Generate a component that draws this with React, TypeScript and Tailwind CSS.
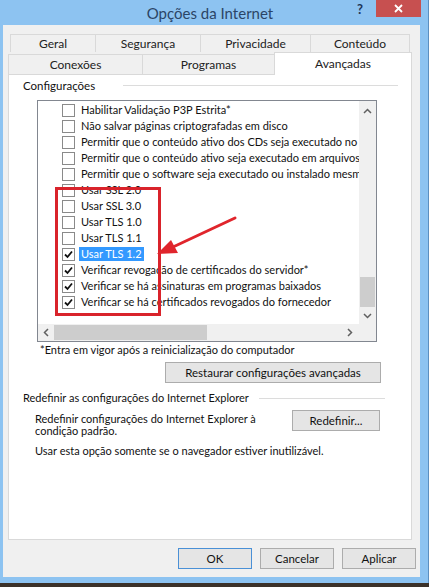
import React from "react";

type Item = { label: string; checked: boolean; selected?: boolean };

const items: Item[] = [
	{ label: "Habilitar Validação P3P Estrita*", checked: false },
	{ label: "Não salvar páginas criptografadas em disco", checked: false },
	{ label: "Permitir que o conteúdo ativo dos CDs seja executado no computador", checked: false },
	{ label: "Permitir que o conteúdo ativo seja executado em arquivos do computador", checked: false },
	{ label: "Permitir que o software seja executado ou instalado mesmo se a assinatura for inválida", checked: false },
	{ label: "Usar SSL 2.0", checked: false },
	{ label: "Usar SSL 3.0", checked: false },
	{ label: "Usar TLS 1.0", checked: false },
	{ label: "Usar TLS 1.1", checked: false },
	{ label: "Usar TLS 1.2", checked: true, selected: true },
	{ label: "Verificar revogação de certificados do servidor*", checked: true },
	{ label: "Verificar se há assinaturas em programas baixados", checked: true },
	{ label: "Verificar se há certificados revogados do fornecedor", checked: true },
];

const font = { fontFamily: 'Lato, "Noto Sans", sans-serif' };

function CheckBox({ checked }: { checked: boolean }) {
	return (
		<div className="w-[13px] h-[13px] shrink-0 border border-[#8a8a8a] bg-white flex items-center justify-center">
			{checked && (
				<svg width="9" height="9" viewBox="0 0 9 9">
					<path d="M1 4.5 L3.5 7 L8 1.5" fill="none" stroke="#111" strokeWidth="1.8" />
				</svg>
			)}
		</div>
	);
}

function Button({ label, width, primary }: { label: string; width: string; primary?: boolean }) {
	return (
		<div
			className={`${width} h-[21px] flex items-center justify-center text-[11.5px] text-[#111] bg-[#e5e5e5] border ${
				primary ? "border-[#4a90d6]" : "border-[#acacac]"
			}`}
		>
			{label}
		</div>
	);
}

function Tab({ label, width }: { label: string; width: string }) {
	return (
		<div
			className={`${width} h-[18px] flex items-center justify-center bg-[#f0f0f0] border border-[#d9d9d9] border-b-0 -ml-px first:ml-0 text-[12px] text-[#222]`}
		>
			{label}
		</div>
	);
}

export default function App() {
	return (
		<div className="w-[429px] h-[587px] bg-[#3b3129] overflow-hidden" style={font}>
			<div className="h-[583px] bg-[#8dc3f1] border-r border-[#5c8fc0] flex flex-col">
				{/* title bar */}
				<div className="h-[25px] shrink-0 relative flex justify-center">
					<span className="ml-[-8px] mt-[2px] text-[15px] text-[#2b4566]">Opções da Internet</span>
					<span className="absolute left-[357px] top-0 text-[13px] font-bold text-[#1d3557]">?</span>
					<div className="absolute left-[376px] top-0 w-[45px] h-[17px] bg-[#c75050] flex items-center justify-center">
						<svg width="9" height="9" viewBox="0 0 9 9">
							<path d="M1 1 L8 8 M8 1 L1 8" stroke="#fff" strokeWidth="1.8" />
						</svg>
					</div>
				</div>

				{/* client area */}
				<div className="ml-[3px] mr-[8px] h-[552px] bg-[#f0f0f0] flex flex-col relative">
					{/* tabs */}
					<div className="mt-[9px] ml-[7px] flex">
						<Tab label="Geral" width="w-[86px]" />
						<Tab label="Segurança" width="w-[106px]" />
						<Tab label="Privacidade" width="w-[111px]" />
						<Tab label="Conteúdo" width="w-[100px]" />
					</div>
					<div className="ml-[5px] flex items-end">
						<div className="w-[135px] h-[20px] flex items-center justify-center bg-[#f0f0f0] border border-[#d9d9d9] border-b-0 text-[12px] text-[#222]">
							Conexões
						</div>
						<div className="w-[133px] h-[20px] -ml-px flex items-center justify-center bg-[#f0f0f0] border border-[#d9d9d9] border-b-0 text-[12px] text-[#222]">
							Programas
						</div>
						<div className="w-[138px] h-[23px] -ml-px -mb-px relative z-10 flex items-start pt-[2px] justify-center bg-white border border-[#d9d9d9] border-b-0 text-[12px] text-[#222]">
							Avançadas
						</div>
					</div>

					{/* panel */}
					<div className="ml-[5px] w-[404px] h-[466px] bg-white border border-[#d9d9d9] flex flex-col text-[11px] text-[#111]">
						<div className="mt-[2px] ml-[14px] flex items-center text-[11.5px]">
							<span>Configurações</span>
							<div className="ml-[28px] w-[275px] h-px bg-[#dcdcdc]" />
						</div>

						{/* list box */}
						<div className="mt-[6px] ml-[28px] w-[340px] h-[242px] border border-[#828790] relative flex flex-col">
							<div className="flex flex-1 min-h-0">
								<div className="w-[321px] overflow-hidden pt-[1px]">
									{items.map((it) => (
										<div key={it.label} className="h-[16px] flex items-center pl-[24px] whitespace-nowrap">
											<CheckBox checked={it.checked} />
											<span
												className={`ml-[4px] px-[2px] leading-[14px] ${
													it.selected ? "bg-[#3399ff] text-white" : ""
												}`}
											>
												{it.label}
											</span>
										</div>
									))}
								</div>
								<div className="w-[17px] bg-[#f0f0f0] flex flex-col items-center">
									<svg className="mt-[7px]" width="9" height="6" viewBox="0 0 9 6">
										<path d="M1 5 L4.5 1.5 L8 5" fill="none" stroke="#606060" strokeWidth="1.5" />
									</svg>
									<div className="flex-1" />
									<div className="w-[15px] h-[30px] bg-[#cdcdcd] mb-[6px]" />
									<svg className="mb-[5px]" width="9" height="6" viewBox="0 0 9 6">
										<path d="M1 1 L4.5 4.5 L8 1" fill="none" stroke="#606060" strokeWidth="1.5" />
									</svg>
								</div>
							</div>
							<div className="h-[17px] flex">
								<div className="w-[321px] bg-[#f0f0f0] flex items-center">
									<svg className="ml-[5px]" width="6" height="9" viewBox="0 0 6 9">
										<path d="M5 1 L1.5 4.5 L5 8" fill="none" stroke="#606060" strokeWidth="1.5" />
									</svg>
									<div className="ml-[5px] w-[153px] h-[15px] bg-[#cdcdcd]" />
									<div className="flex-1" />
									<svg className="mr-[6px]" width="6" height="9" viewBox="0 0 6 9">
										<path d="M1 1 L4.5 4.5 L1 8" fill="none" stroke="#606060" strokeWidth="1.5" />
									</svg>
								</div>
								<div className="w-[17px] bg-[#f0f0f0]" />
							</div>
						</div>

						<div className="mt-[0px] ml-[31px]">*Entra em vigor após a reinicialização do computador</div>
						<div className="mt-[3px] ml-[156px]">
							<Button label="Restaurar configurações avançadas" width="w-[216px]" />
						</div>

						<div className="mt-[7px] ml-[14px] flex items-center">
							<span>Redefinir as configurações do Internet Explorer</span>
							<div className="ml-[10px] flex-1 mr-[26px] h-px bg-[#dcdcdc]" />
						</div>
						<div className="mt-[4px] ml-[26px] flex items-start">
							<div className="w-[257px] leading-[12px] pt-[3px]">
								Redefinir configurações do Internet Explorer à
								<br />
								condição padrão.
							</div>
							<Button label="Redefinir..." width="w-[88px]" />
						</div>
						<div className="mt-[6px] ml-[26px]">Usar esta opção somente se o navegador estiver inutilizável.</div>
					</div>

					{/* dialog buttons */}
					<div className="mt-[8px] ml-[175px] flex gap-[8px]">
						<Button label="OK" width="w-[74px]" primary />
						<Button label="Cancelar" width="w-[74px]" />
						<Button label="Aplicar" width="w-[74px]" />
					</div>

					{/* red annotation */}
					<div className="absolute left-[52px] top-[162px] w-[106px] h-[129px] border-[3px] border-[#d9232b]" />
					<svg className="absolute left-[140px] top-[185px]" width="100" height="60" viewBox="0 0 100 60">
						<path d="M92 8 L30 37" stroke="#e0252c" strokeWidth="3" strokeLinecap="round" />
						<path d="M14 44 L28 30 L35 43 Z" fill="#e0252c" />
					</svg>
				</div>
			</div>
		</div>
	);
}
